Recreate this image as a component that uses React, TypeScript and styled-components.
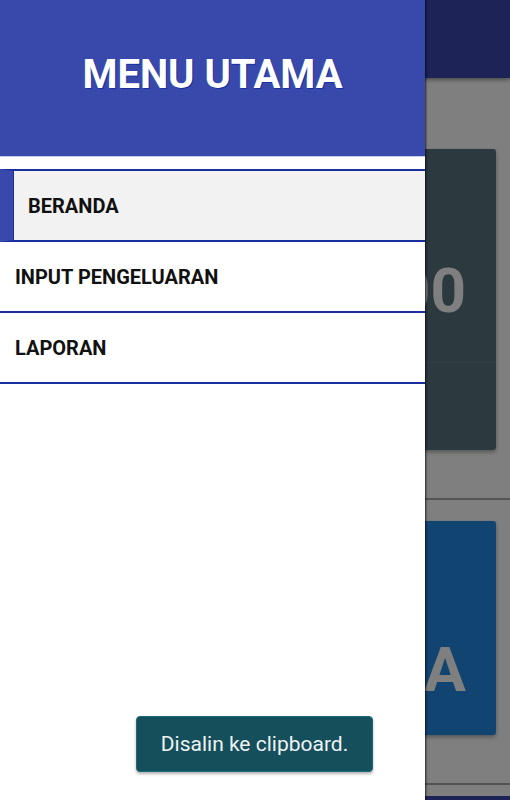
import styled, { createGlobalStyle } from 'styled-components';

const GlobalStyle = createGlobalStyle`
  html, body {
    margin: 0;
    padding: 0;
    height: 800px;
    overflow: hidden;
    font-family: Roboto, "Liberation Sans", sans-serif;
  }
`;

const Page = styled.div`
  position: relative;
  width: 510px;
  height: 800px;
  overflow: hidden;
  background: #ffffff;
  display: flex;
  flex-direction: column;
`;

const AppBar = styled.div`
  height: 78px;
  flex-shrink: 0;
  background: #3a45af;
  box-shadow: 0 2px 4px rgba(0, 0, 0, 0.4);
`;

const Content = styled.div`
  flex: 1;
  display: flex;
  flex-direction: column;
  padding: 71px 14px 0 14px;
`;

const Card = styled.div<{ $bg: string; $height: number }>`
  height: ${(p) => p.$height}px;
  background: ${(p) => p.$bg};
  border-radius: 3px;
  box-shadow: 0 2px 4px rgba(0, 0, 0, 0.35);
  display: flex;
  flex-direction: column;
`;

const CardValue = styled.div<{ $offset: number }>`
  flex: 1;
  display: flex;
  align-items: center;
  justify-content: flex-end;
  padding-right: 30px;
  padding-top: ${(p) => p.$offset}px;
  color: #ffffff;
  font-weight: 700;
  font-size: 62px;
`;

const CardFooter = styled.div`
  height: 87px;
  border-top: 1px solid rgba(255, 255, 255, 0.08);
`;

const Divider = styled.div<{ $top: number; $bottom: number }>`
  height: 2px;
  background: #a8a8a8;
  margin: ${(p) => p.$top}px -14px ${(p) => p.$bottom}px -14px;
`;

const BottomBar = styled.div`
  margin: 11px -14px 0 -14px;
  height: 10px;
  background: #3a45af;
`;

const Scrim = styled.div`
  position: absolute;
  inset: 0;
  background: rgba(0, 0, 0, 0.5);
`;

const Drawer = styled.nav`
  position: absolute;
  top: 0;
  left: 0;
  bottom: 0;
  width: 425px;
  background: #ffffff;
  box-shadow: 1px 0 2px rgba(0, 0, 0, 0.7);
  display: flex;
  flex-direction: column;
`;

const DrawerHeader = styled.div`
  height: 157px;
  background: #3949ab;
  border-bottom: 1px solid #c5cae9;
  display: flex;
  align-items: center;
  justify-content: center;
  padding-bottom: 8px;
  box-sizing: border-box;
`;

const Title = styled.h1`
  margin: 0;
  color: #ffffff;
  font-size: 40px;
  font-weight: 700;
  text-shadow: 1px 1px 0 #1a2fa0;
`;

const MenuList = styled.ul`
  list-style: none;
  margin: 12px 0 0 0;
  padding: 0;
`;

const MenuItem = styled.li<{ $active?: boolean }>`
  height: 69px;
  display: flex;
  align-items: center;
  box-sizing: content-box;
  padding-left: 15px;
  background: ${(p) => (p.$active ? '#f2f2f2' : '#ffffff')};
  border-bottom: 2px solid #1a2fa0;
  border-top: ${(p) => (p.$active ? '2px solid #1a2fa0' : 'none')};
  border-left: ${(p) => (p.$active ? '13px solid #3949ab' : 'none')};
  box-shadow: ${(p) => (p.$active ? 'inset 1px 0 0 #1a2fa0' : 'none')};
  color: #111111;
  font-size: 20px;
  font-weight: 700;
`;

const Toast = styled.div`
  position: absolute;
  left: 136px;
  top: 716px;
  width: 237px;
  height: 56px;
  box-sizing: border-box;
  border-radius: 4px;
  background: #164f5c;
  border: 1px solid #1b6a7a;
  box-shadow: 0 2px 3px rgba(0, 0, 0, 0.3);
  color: #eef3f4;
  font-size: 21px;
  display: flex;
  align-items: center;
  justify-content: center;
`;

const menu = ['BERANDA', 'INPUT PENGELUARAN', 'LAPORAN'];

export default function App() {
  return (
    <>
      <GlobalStyle />
      <Page>
        <AppBar />
        <Content>
          <Card $bg="#58727c" $height={301}>
            <CardValue $offset={70}>100</CardValue>
            <CardFooter />
          </Card>
          <Divider $top={48} $bottom={21} />
          <Card $bg="#2288e0" $height={214}>
            <CardValue $offset={82}>DANA</CardValue>
          </Card>
          <Divider $top={48} $bottom={0} />
          <BottomBar />
        </Content>
        <Scrim />
        <Drawer>
          <DrawerHeader>
            <Title>MENU UTAMA</Title>
          </DrawerHeader>
          <MenuList>
            {menu.map((m, i) => (
              <MenuItem key={m} $active={i === 0}>
                {m}
              </MenuItem>
            ))}
          </MenuList>
        </Drawer>
        <Toast>Disalin ke clipboard.</Toast>
      </Page>
    </>
  );
}
